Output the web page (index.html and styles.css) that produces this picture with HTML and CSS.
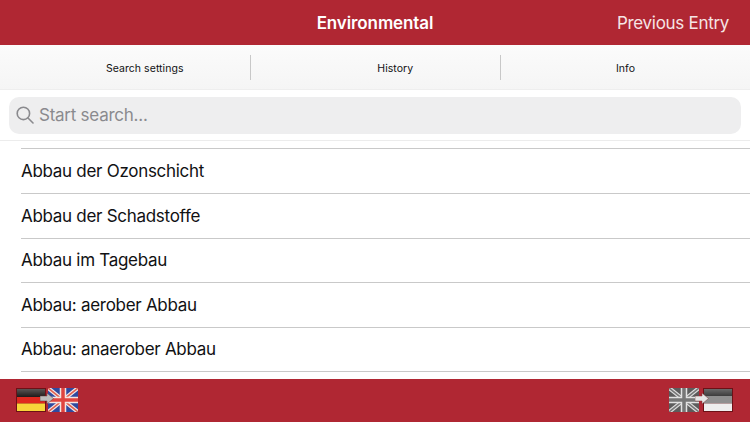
FILE: index.html
```html
<!DOCTYPE html>
<html lang="en">
<head>
    <meta charset="UTF-8">
    <meta name="viewport" content="width=device-width, initial-scale=1.0">
    <title>Environmental</title>
    <link rel="stylesheet" href="styles.css">
</head>
<body>
    <header class="top-bar">
        <span class="top-spacer"></span>
        <h1 class="top-title">Environmental</h1>
        <a class="top-link">Previous Entry</a>
    </header>

    <nav class="tabs">
        <div class="tab">Search settings</div>
        <div class="tab">History</div>
        <div class="tab">Info</div>
    </nav>

    <div class="search-wrap">
        <div class="search-box">
            <svg class="search-icon" width="18" height="18" viewBox="0 0 18 18" fill="none" stroke="#8a8a8e" stroke-width="1.6" stroke-linecap="round">
                <circle cx="7.4" cy="7.4" r="6.2"/>
                <path d="M12 12l5 5"/>
            </svg>
            <span>Start search...</span>
        </div>
    </div>

    <ul class="entries">
        <li>Abbau der Ozonschicht</li>
        <li>Abbau der Schadstoffe</li>
        <li>Abbau im Tagebau</li>
        <li>Abbau: aerober Abbau</li>
        <li>Abbau: anaerober Abbau</li>
    </ul>

    <footer class="bottom-bar">
        <div class="flag-pair">
            <svg class="flag" width="30" height="24" viewBox="0 0 30 24">
                <defs>
                    <linearGradient id="deBlack" x1="0" y1="0" x2="0" y2="1">
                        <stop offset="0" stop-color="#5a5554"/>
                        <stop offset="1" stop-color="#1f1a1a"/>
                    </linearGradient>
                </defs>
                <rect width="30" height="24" fill="#6d1016"/>
                <rect x="1" y="1" width="28" height="8" fill="url(#deBlack)"/>
                <rect x="1" y="9" width="28" height="6.5" fill="#e0281f"/>
                <rect x="1" y="15.5" width="28" height="7.5" fill="#f8d53a"/>
            </svg>
            <svg class="flag" width="30" height="24" viewBox="0 0 30 24">
                <rect width="30" height="24" fill="#2f4aa0"/>
                <path d="M0 0L30 24M30 0L0 24" stroke="#f2e6e6" stroke-width="4"/>
                <path d="M0 0L30 24M30 0L0 24" stroke="#e0604f" stroke-width="1.6"/>
                <path d="M15 0V24M0 12H30" stroke="#f5e4e0" stroke-width="6.5"/>
                <path d="M15 0V24M0 12H30" stroke="#e0453f" stroke-width="3.5"/>
            </svg>
            <svg class="arrow" width="14" height="11" viewBox="0 0 14 11">
                <path d="M0 3h7V0l6.5 5.5L7 11V8H0z" fill="#bdbdbd" stroke="#5a3a3a" stroke-width="0.5"/>
            </svg>
        </div>
        <div class="flag-pair flag-pair-off">
            <svg class="flag" width="30" height="24" viewBox="0 0 30 24">
                <rect width="30" height="24" fill="#5c5c5c"/>
                <path d="M0 0L30 24M30 0L0 24" stroke="#dcdcdc" stroke-width="4"/>
                <path d="M0 0L30 24M30 0L0 24" stroke="#777" stroke-width="1.6"/>
                <path d="M15 0V24M0 12H30" stroke="#e2e2e2" stroke-width="6.5"/>
                <path d="M15 0V24M0 12H30" stroke="#767676" stroke-width="3.5"/>
            </svg>
            <svg class="flag" width="30" height="24" viewBox="0 0 30 24">
                <defs>
                    <linearGradient id="deGrey" x1="0" y1="0" x2="0" y2="1">
                        <stop offset="0" stop-color="#6a6a6a"/>
                        <stop offset="1" stop-color="#3c3c3c"/>
                    </linearGradient>
                </defs>
                <rect width="30" height="24" fill="#6d1016"/>
                <rect x="1" y="1" width="28" height="7" fill="url(#deGrey)"/>
                <rect x="1" y="8" width="28" height="7.5" fill="#8f8f8f"/>
                <rect x="1" y="15.5" width="28" height="7.5" fill="#eeeeee"/>
            </svg>
            <svg class="arrow" width="14" height="11" viewBox="0 0 14 11">
                <path d="M0 3h7V0l6.5 5.5L7 11V8H0z" fill="#e6e6e6" stroke="#7a3a3a" stroke-width="0.5"/>
            </svg>
        </div>
    </footer>
</body>
</html>
```

FILE: styles.css
```css
:root {
    --brand-red: #b02733;
    --text-color: #111113;
    --line-color: #c9c9c9;
}

* {
    box-sizing: border-box;
}

html, body {
    height: 100%;
}

body {
    margin: 0;
    width: 750px;
    height: 422px;
    overflow: hidden;
    display: flex;
    flex-direction: column;
    font-family: "Inter", "Liberation Sans", sans-serif;
    color: var(--text-color);
    background: #fff;
}

.top-bar {
    flex: 0 0 45px;
    display: flex;
    align-items: center;
    padding: 0 21px;
    background: var(--brand-red);
    color: #fff;
}

.top-spacer {
    flex: 1;
}

.top-title {
    margin: 0;
    font-size: 17px;
    font-weight: 600;
    letter-spacing: -0.1px;
}

.top-link {
    flex: 1;
    text-align: right;
    font-size: 17px;
    letter-spacing: -0.3px;
    color: #f6e4e5;
}

.tabs {
    flex: 0 0 45px;
    display: flex;
    align-items: center;
    background: linear-gradient(#fbfbfb, #f5f5f5);
    border-bottom: 1px solid #eee;
}

.tab {
    flex: 0 0 250.5px;
    height: 25px;
    padding: 2px 0 0 40px;
    display: flex;
    align-items: center;
    justify-content: center;
    font-size: 10.5px;
    letter-spacing: 0.05px;
    border-right: 1px solid #c8c8c8;
}

.tab:last-child {
    flex: 1;
    padding-left: 0;
    border-right: none;
}

.search-wrap {
    flex: 0 0 51px;
    padding: 7px 9px 6px;
    border-bottom: 1px solid #ececec;
}

.search-box {
    height: 37px;
    display: flex;
    align-items: center;
    gap: 5px;
    padding: 0 0 1px 7px;
    border-radius: 10px;
    background: #eeeeef;
    color: #8a8a8e;
    font-size: 17px;
    letter-spacing: -0.25px;
}

.entries {
    flex: 1;
    margin: 0;
    padding: 7px 0 0 21px;
    list-style: none;
    overflow: hidden;
}

.entries li {
    height: 44.75px;
    display: flex;
    align-items: center;
    border-top: 1px solid var(--line-color);
    font-size: 17px;
    letter-spacing: -0.29px;
}

.entries li:last-child {
    border-bottom: 1px solid var(--line-color);
}

.bottom-bar {
    flex: 0 0 43px;
    display: flex;
    justify-content: space-between;
    align-items: center;
    padding: 0 17px 1px 16px;
    background: var(--brand-red);
}

.flag-pair {
    position: relative;
    display: flex;
    gap: 2px;
    height: 24px;
    filter: blur(0.4px);
}

.flag-pair-off {
    gap: 4px;
}

.flag {
    display: block;
}

/* arrow sits over the join of the two flags */
.arrow {
    position: absolute;
    left: 24px;
    top: 5px;
}

.flag-pair-off .arrow {
    left: 26px;
}
```
